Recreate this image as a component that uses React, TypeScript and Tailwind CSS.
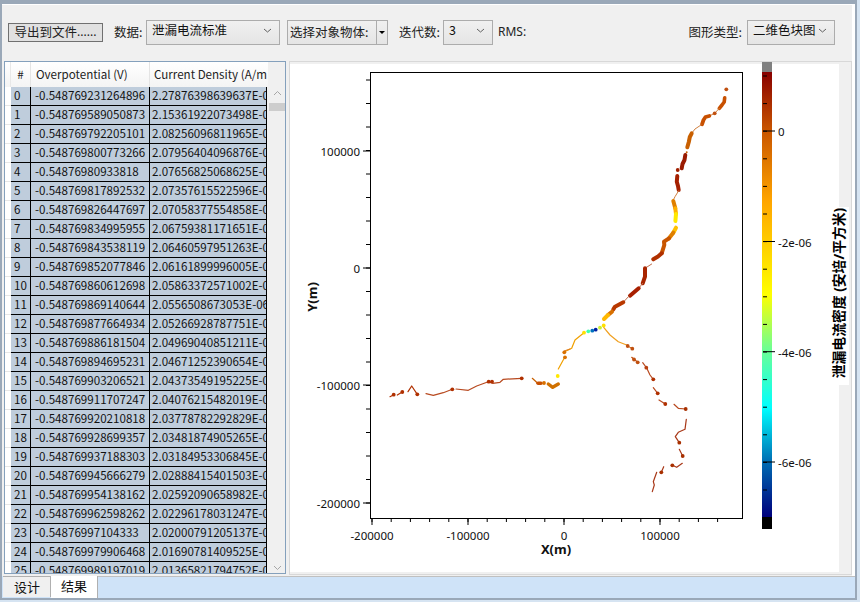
const rows: [string, string][] = [
  ["-0.548769231264896", "2.27876398639637E-06"],
  ["-0.548769589050873", "2.15361922073498E-06"],
  ["-0.548769792205101", "2.08256096811965E-06"],
  ["-0.548769800773266", "2.07956404096876E-06"],
  ["-0.54876980933818", "2.07656825068625E-06"],
  ["-0.548769817892532", "2.07357615522596E-06"],
  ["-0.548769826447697", "2.07058377554858E-06"],
  ["-0.548769834995955", "2.06759381171651E-06"],
  ["-0.548769843538119", "2.06460597951263E-06"],
  ["-0.548769852077846", "2.06161899996005E-06"],
  ["-0.548769860612698", "2.05863372571002E-06"],
  ["-0.548769869140644", "2.0556508673053E-06"],
  ["-0.548769877664934", "2.05266928787751E-06"],
  ["-0.548769886181504", "2.04969040851211E-06"],
  ["-0.548769894695231", "2.04671252390654E-06"],
  ["-0.548769903206521", "2.04373549195225E-06"],
  ["-0.548769911707247", "2.04076215482019E-06"],
  ["-0.548769920210818", "2.03778782292829E-06"],
  ["-0.548769928699357", "2.03481874905265E-06"],
  ["-0.548769937188303", "2.03184953306845E-06"],
  ["-0.548769945666279", "2.02888415401503E-06"],
  ["-0.548769954138162", "2.02592090658982E-06"],
  ["-0.548769962598262", "2.02296178031247E-06"],
  ["-0.54876997104333", "2.02000791205137E-06"],
  ["-0.548769979906468", "2.01690781409525E-06"],
  ["-0.548769989197019", "2.01365821794752E-06"],
];

// [color, stroke width, points] in page pixels
const traces: [string, number, string][] = [
  ["#c85000", 3.6, "724.7,97.7 724.2,102 722,105 719.3,108.3"],
  ["#d08040", 1, "719.3,108.3 714.7,113.3 709.3,116"],
  ["#c85000", 3.8, "709.3,116 705.5,117 703.5,120 702,124.3"],
  ["#d08040", 1, "701,125 695,129 691.7,133.3"],
  ["#c85f00", 4, "691.7,133.3 689.8,137 688.8,142 687.3,147.3"],
  ["#9a1a00", 4, "685.3,155 684.5,160 682.5,164 681.7,168.3"],
  ["#a52000", 4, "677.3,176 676.8,181.7 678,186 678.7,190"],
  ["#d08040", 1, "678.7,190.7 675,196.7 673.3,200"],
  ["#e08000", 4, "673.3,201 675.3,208.3"],
  ["#ffb000", 4, "675.3,208.3 676,214"],
  ["#ffe800", 4, "676,214 675.4,221"],
  ["#ffc000", 4, "676,227.7 673.3,232.7"],
  ["#e08000", 4, "673.3,232.7 669,238.3"],
  ["#c85500", 4, "669,238.3 664,241.7 664.3,245 661.7,253.3"],
  ["#b03000", 4, "661.7,253.3 658,256.5 653.3,259.3"],
  ["#c07050", 1, "651.7,264 645,268.3"],
  ["#a82500", 4, "645,268.3 645,276.7 642.7,283.3"],
  ["#c07050", 1, "642.7,283.3 638.7,288.3"],
  ["#a82000", 4, "638.7,288.3 630,295.7"],
  ["#c07050", 1, "629,296 623.3,302.3"],
  ["#b83800", 4, "623.3,302.3 615,306.7 613.3,309.3"],
  ["#d87000", 4, "612,311.7 608,315"],
  ["#ffb800", 4, "608,315 604,319"],
  ["#f0a000", 1.2, "584,332.7 575,340 571.7,348.3 564.7,351.7"],
  ["#f0a000", 1.2, "565,356.7 558.3,369"],
  ["#e08020", 1.2, "564.3,351 570,349"],
  ["#d07000", 3.4, "558.3,384 552.7,387.3 548.3,384"],
  ["#c86000", 1.2, "532.3,378.3 537.7,383.3"],
  ["#c85000", 3.4, "538,383.3 541,383.3"],
  ["#b84a20", 1.2, "521.7,378.3 503.3,379.3 500,382.3 492.7,383.3 488.3,381.7 476.7,386 468.3,390.3 456,389"],
  ["#b84a20", 1.2, "452.3,389.3 443.3,392.7 433.3,395.3 426,393.7"],
  ["#b03000", 1.2, "417.3,394.3 411.7,386 408,391.7"],
  ["#b03000", 1.2, "402.3,392 397.3,395"],
  ["#b03000", 1.2, "393.7,394.7 390,396.7"],
  ["#f0a020", 1.2, "603.7,327.3 610,335 618.3,341.7 626.7,345"],
  ["#c86000", 1, "627.7,346 632.3,348.7"],
  ["#c05010", 1.2, "631.7,357.3 637.7,362.3"],
  ["#b84a20", 1.2, "642.7,362.7 646.7,368 650,375 653.3,379.3"],
  ["#b84a20", 1.2, "653.3,387.7 657.7,393.3"],
  ["#b84a20", 1.2, "659,400 665.3,404"],
  ["#b84a20", 1.2, "674,404.3 678.3,408.3 685.7,409"],
  ["#a83818", 1.2, "686.3,419.3 685,429.3 678.3,432.3 675.3,436.7 679.3,442.7"],
  ["#a83818", 1.2, "679.3,449.3 682.7,456"],
  ["#a83818", 1.2, "682.3,463.3 676.7,467.3 672.3,465.3"],
  ["#a83818", 1.2, "663.7,466.7 661.3,472.3"],
  ["#a83818", 1.2, "656.7,472.3 653.3,481.7 654.3,485 652.3,491.7"],
];

const dots: [number, number, string, number?][] = [
  [726.3, 89.3, "#c05010"], [714.7, 113.3, "#c05010"], [686.7, 152.3, "#c86000", 1], [677.7, 170, "#a02000"],
  [603.7, 325.5, "#ffe000"], [600, 327.7, "#c8f030"], [595.7, 329.7, "#0020a0"], [592.3, 330.7, "#0070c0"],
  [588.3, 331.3, "#40ffb0"], [584, 332.7, "#ffe000"], [564.3, 352.3, "#d87000"], [565, 357.3, "#d87000"],
  [557.7, 376, "#ffe800"], [544, 383, "#d87000"], [521.7, 378.3, "#b03000"], [488.7, 381.7, "#b03000"],
  [492, 381.7, "#b03000"], [452.3, 389.3, "#b03000"], [417.3, 394.3, "#b03000"], [402.3, 392, "#b03000"],
  [393.7, 394.7, "#b03000"], [627.7, 346, "#c05010"], [632.3, 348.7, "#c05010"], [634, 359.5, "#c05010"],
  [637.7, 362.3, "#c05010"], [646.3, 367.7, "#b84010"], [653.3, 379.3, "#b03000"], [657.7, 393.3, "#b03000"],
  [665.3, 404, "#b03000"], [685.7, 409, "#a83000"], [679.3, 442.7, "#a83000"], [682.7, 456, "#a83000"],
  [672.3, 465.3, "#a83000"], [661.3, 472.3, "#a83000"],
];

const xMajor: [number, string][] = [[372, "-200000"], [468, "-100000"], [564, "0"], [660, "100000"]];
const yMajor: [number, string][] = [[151, "100000"], [268, "0"], [385, "-100000"], [503, "-200000"]];
const barMajor: [number, string][] = [[131, "0"], [241.5, "-2e-06"], [351.7, "-4e-06"], [462, "-6e-06"]];

function Chevron() {
  return (
    <svg width="9" height="5" viewBox="0 0 9 5" className="shrink-0">
      <path d="M1 1l3.5 3L8 1" fill="none" stroke="#606060" strokeWidth="1" />
    </svg>
  );
}

function Select({ text, width }: { text: string; width: string }) {
  return (
    <div className={`${width} flex h-[25px] items-center justify-between border border-[#acacac] bg-gradient-to-b from-[#f0f0f0] to-[#e5e5e5] pb-[4px] pl-[5px] pr-[7px] text-[12.5px] text-[#111]`}>
      <span>{text}</span>
      <Chevron />
    </div>
  );
}

function Toolbar() {
  return (
    <div className="flex h-[56px] shrink-0 items-center bg-[#f0f0f0] pb-[2px] pl-[6px] pr-[17px] text-[12.5px] text-[#222]">
      <div className="flex h-[19px] w-[95px] items-center justify-center border border-[#707070] bg-[#e1e1e1]">
        导出到文件<span className="font-['Noto_Sans',sans-serif] text-[12px]">......</span>
      </div>
      <span className="ml-[11px] w-[32px] whitespace-nowrap">数据:</span>
      <Select text="泄漏电流标准" width="w-[134px]" />
      <div className="ml-[7px] flex h-[25px] w-[101px] border border-[#acacac] bg-gradient-to-b from-[#f0f0f0] to-[#e5e5e5]">
        <span className="flex-1 whitespace-nowrap pl-[2px] leading-[22px]">选择对象物体:</span>
        <span className="flex w-[11px] items-center justify-center border-l border-[#acacac]">
          <span className="h-0 w-0 border-x-[3px] border-t-[3px] border-x-transparent border-t-black" />
        </span>
      </div>
      <span className="ml-[11px] w-[44px] whitespace-nowrap">迭代数:</span>
      <Select text="3" width="w-[50px]" />
      <span className="ml-[5px] font-['Noto_Sans','Noto_Sans_CJK_SC',sans-serif] text-[12px]">RMS:</span>
      <span className="ml-auto mr-[5px] whitespace-nowrap">图形类型:</span>
      <Select text="二维色块图" width="w-[88px]" />
    </div>
  );
}

function DataTable() {
  return (
    <div className="relative h-[513px] w-[282px] shrink-0 overflow-hidden border border-[#84a0bc] bg-[#f0f0f0] text-[11.6px] text-[#111]">
      <div className="flex h-[25px] w-[263px] bg-gradient-to-b from-white to-[#f4f4f4] text-[#222]">
        <div className="w-[6px] border-r border-[#e8e8e8]" />
        <div className="w-[20px] border-r border-[#e4e4e4] text-center leading-[25px]">#</div>
        <div className="w-[119px] border-r border-[#e4e4e4] pl-[5px] leading-[25px]">Overpotential (V)</div>
        <div className="w-[117px] overflow-hidden whitespace-nowrap pl-[4px] leading-[25px]">Current Density (A/m²)</div>
      </div>
      <div className="flex">
        <div className="w-[262px] shrink-0">
          {rows.map((r, i) => (
            <div key={i} className="flex h-[19px] leading-[17px]">
              <div className="w-[6px] border-b border-[#e6e6e6] bg-white" />
              <div className="w-[20px] border-b border-r border-black bg-[#bfcddc] pl-[3px]">{i}</div>
              <div className="w-[119px] border-b border-r border-black bg-[#bfcddc] pl-[4px]">{r[0]}</div>
              <div className="w-[117px] overflow-hidden whitespace-nowrap border-b border-r border-black bg-[#bfcddc] pl-[2px]">{r[1]}</div>
            </div>
          ))}
        </div>
        <div className="ml-[2px] flex h-[487px] w-[17px] flex-col items-center bg-[#f0f0f0]">
          <svg width="9" height="6" viewBox="0 0 9 6" className="mt-[3px]">
            <path d="M1 5l3.5-3.5L8 5" fill="none" stroke="#a6a6a6" strokeWidth="1" />
          </svg>
          <div className="mt-[7px] h-[8px] w-full bg-[#cdcdcd]" />
          <svg width="9" height="6" viewBox="0 0 9 6" className="mt-auto mb-[3px]">
            <path d="M1 1l3.5 3.5L8 1" fill="none" stroke="#a6a6a6" strokeWidth="1" />
          </svg>
        </div>
      </div>
    </div>
  );
}

function Chart() {
  const font = "'Noto Sans','Noto Sans CJK SC',sans-serif";
  const xMinor = Array.from({ length: 19 }, (_, i) => 372 + i * 19.2);
  const yMinor = Array.from({ length: 19 }, (_, i) => 80 + i * 23.5);
  const barMinor = Array.from({ length: 16 }, (_, i) => 76 + i * 27.6);
  return (
    <svg viewBox="290 62 561 512" width="561" height="512" className="block" fontFamily={font} fontSize="11.5" fill="#111">
      <defs>
        <linearGradient id="cbar" x1="0" y1="0" x2="0" y2="1">
          <stop offset="0" stopColor="#880000" />
          <stop offset="0.13" stopColor="#c85400" />
          <stop offset="0.29" stopColor="#ffa500" />
          <stop offset="0.5" stopColor="#ffff00" />
          <stop offset="0.62" stopColor="#70ff90" />
          <stop offset="0.755" stopColor="#00ffff" />
          <stop offset="0.88" stopColor="#0068b0" />
          <stop offset="1" stopColor="#00007c" />
        </linearGradient>
      </defs>
      <rect x="290" y="64" width="549" height="508" fill="#fff" />
      <rect x="839" y="207" width="10" height="178" fill="#fff" />
      <rect x="370.5" y="72.5" width="372" height="446" fill="#fff" stroke="#000" />
      {xMinor.map((x) => <line key={x} x1={x} x2={x} y1="519" y2="522" stroke="#000" />)}
      {yMinor.map((y) => <line key={y} x1="366" x2="370" y1={y} y2={y} stroke="#000" />)}
      {xMajor.map(([x, t]) => (
        <g key={t}>
          <line x1={x} x2={x} y1="519" y2="525" stroke="#000" />
          <text x={x} y="540" textAnchor="middle">{t}</text>
        </g>
      ))}
      {yMajor.map(([y, t]) => (
        <g key={t}>
          <line x1="363" x2="370" y1={y} y2={y} stroke="#000" />
          <text x="360" y={y + 5} textAnchor="end">{t}</text>
        </g>
      ))}
      <text x="556" y="554" textAnchor="middle" fontWeight="700" fontSize="13">X(m)</text>
      <text transform="translate(317 297) rotate(-90)" textAnchor="middle" fontWeight="700" fontSize="13">Y(m)</text>
      {traces.map(([c, w, p], i) => (
        <polyline key={i} points={p} fill="none" stroke={c} strokeWidth={w} strokeLinecap="round" strokeLinejoin="round" />
      ))}
      {dots.map(([x, y, c, r], i) => <circle key={i} cx={x} cy={y} r={r ?? 1.9} fill={c} />)}
      <rect x="762" y="62" width="10" height="10" fill="#808080" />
      <rect x="762" y="72" width="10" height="445" fill="url(#cbar)" />
      <rect x="762" y="517" width="10" height="12" fill="#000" />
      {barMinor.map((y) => <line key={y} x1="763" x2="767" y1={y} y2={y} stroke="#000" />)}
      {barMajor.map(([y, t]) => (
        <g key={t}>
          <line x1="763" x2="775" y1={y} y2={y} stroke="#000" />
          <text x="778" y={y + 5}>{t}</text>
        </g>
      ))}
      <text transform="translate(843.5 293) rotate(-90)" textAnchor="middle" fontWeight="700" fontSize="13.8" fill="#000">泄漏电流密度 (安培/平方米)</text>
    </svg>
  );
}

function Tabs() {
  return (
    <div className="flex h-[24px] shrink-0 border-b-2 border-[#9aa8b8] bg-[#cfe3f8] text-[13px] text-[#111]">
      <div className="ml-[1px] h-[21px] w-[48px] border-r border-t border-[#b0b0b0] bg-[#f0f0f0] pl-[11px] leading-[19px]">设计</div>
      <div className="h-[22px] w-[47px] border-r border-[#b0b0b0] bg-white pl-[10px] leading-[20px]">结果</div>
      <div className="flex-1 border-t border-[#c0c0c0]" />
    </div>
  );
}

export default function App() {
  return (
    <div className="h-[602px] w-[860px] overflow-hidden bg-[#d6e4f2] pr-[3px] font-['Noto_Sans_CJK_SC','Noto_Sans',sans-serif]">
      <div className="flex h-[600px] flex-col border-x-2 border-t-[4px] border-[#9aa8b8] bg-white">
        <div className="mt-[1px] flex flex-1 flex-col pr-[3px]">
          <Toolbar />
          <div className="flex flex-1 gap-[3px] bg-[#f0f0f0] pl-[2px]">
            <DataTable />
            <div className="h-[514px] flex-1 border border-[#d8d8d8]">
              <Chart />
            </div>
          </div>
        </div>
        <Tabs />
      </div>
    </div>
  );
}
